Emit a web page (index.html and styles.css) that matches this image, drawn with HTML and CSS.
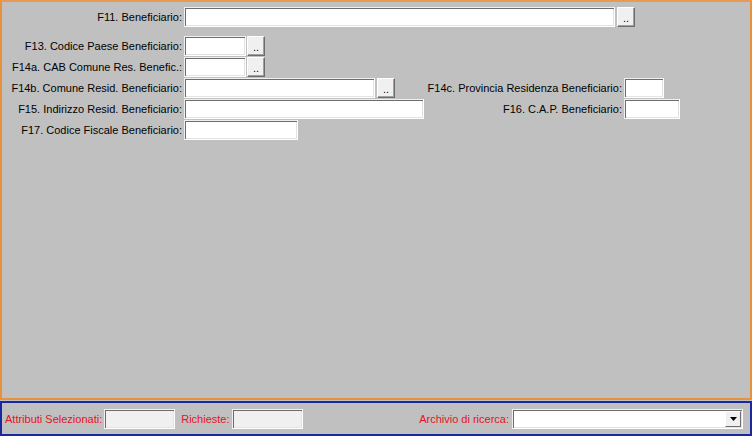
FILE: index.html
```html
<!DOCTYPE html>
<html>
<head>
<meta charset="utf-8">
<link rel="stylesheet" href="styles.css">
</head>
<body>
<div class="main">
  <div class="row row-first">
    <span class="lbl">F11. Beneficiario:</span>
    <span class="field w-431"></span>
    <span class="btn">..</span>
  </div>
  <div class="row row-gap">
    <span class="lbl">F13. Codice Paese Beneficiario:</span>
    <span class="field w-62"></span>
    <span class="btn btn-tight">..</span>
  </div>
  <div class="row">
    <span class="lbl">F14a. CAB Comune Res. Benefic.:</span>
    <span class="field w-62"></span>
    <span class="btn btn-tight">..</span>
  </div>
  <div class="row">
    <div class="left">
      <span class="lbl">F14b. Comune Resid. Beneficiario:</span>
      <span class="field w-191"></span>
      <span class="btn">..</span>
    </div>
    <span class="lbl2">F14c. Provincia Residenza Beneficiario:</span>
    <div class="slot"><span class="field w-40"></span></div>
  </div>
  <div class="row">
    <div class="left">
      <span class="lbl">F15. Indirizzo Resid. Beneficiario:</span>
      <span class="field w-240"></span>
    </div>
    <span class="lbl2">F16. C.A.P. Beneficiario:</span>
    <div class="slot"><span class="field w-56"></span></div>
  </div>
  <div class="row">
    <span class="lbl">F17. Codice Fiscale Beneficiario:</span>
    <span class="field w-114"></span>
  </div>
</div>
<div class="footer">
  <span class="red">Attributi Selezionati:</span>
  <span class="field disabled w-71"></span>
  <span class="red red-sp">Richieste:</span>
  <span class="field disabled w-71"></span>
  <span class="red red-right">Archivio di ricerca:</span>
  <span class="field select">
    <span class="arrow"><svg width="7" height="4" viewBox="0 0 7 4"><polygon points="0,0 7,0 3.5,4" fill="#000"/></svg></span>
  </span>
</div>
</body>
</html>
```
FILE: styles.css
```css
html, body {
  margin: 0;
  padding: 0;
  background: #c0c0c0;
  width: 752px;
  height: 436px;
  overflow: hidden;
  font-family: "Liberation Sans", Arial, sans-serif;
  font-size: 11px;
  color: #000;
}

.main {
  box-sizing: border-box;
  height: 400px;
  border: 2px solid #e8913c;
  border-top-color: #e99a52;
  padding: 5px 0 0 0;
  display: flex;
  flex-direction: column;
  gap: 1px;
}

.row {
  display: flex;
  align-items: center;
  height: 20px;
}

.row-gap {
  margin-top: 8px;
}

.left {
  display: flex;
  align-items: center;
  flex: none;
}

.lbl {
  flex: none;
  width: 180px;
  text-align: right;
  white-space: nowrap;
  margin-right: 2px;
}

.lbl2 {
  flex: 1;
  text-align: right;
  white-space: nowrap;
  margin-right: 2px;
}

.slot {
  flex: none;
  width: 126px;
  display: flex;
  align-items: center;
}

.field {
  box-sizing: border-box;
  flex: none;
  display: inline-block;
  height: 20px;
  background: #fff;
  border: 1px solid;
  border-color: #f0f0f0 #ffffff #ffffff #f0f0f0;
  box-shadow: inset 1px 1px 0 #6d6d6d, inset -1px -1px 0 #e3e3e3;
}

.w-431 { width: 431px; }
.w-62 { width: 62px; }
.w-191 { width: 191px; }
.w-240 { width: 240px; }
.w-114 { width: 114px; }
.w-40 { width: 40px; }
.w-56 { width: 56px; }
.w-71 { width: 71px; }

.btn {
  box-sizing: border-box;
  flex: none;
  width: 18px;
  height: 20px;
  margin-left: 2px;
  background: #f0f0f0;
  border: 1px solid;
  border-color: #ffffff #6d6d6d #6d6d6d #ffffff;
  box-shadow: inset -1px -1px 0 #a0a0a0;
  font-size: 11px;
  line-height: 11px;
  text-align: center;
  padding-top: 5px;
  color: #000;
}

.btn-tight {
  margin-left: 1px;
}

.footer {
  box-sizing: border-box;
  height: 35px;
  margin-top: 1px;
  border: 2px solid #1a28a0;
  display: flex;
  align-items: center;
  padding: 0 0 0 3px;
}

.red {
  color: #e8121e;
  white-space: nowrap;
  margin-right: 2px;
}

.red-sp {
  margin-left: 6px;
}

.red-right {
  margin-left: auto;
  margin-right: 3px;
}

.disabled {
  background: #f0f0f0;
}

.select {
  width: 231px;
  margin-right: 7px;
  display: flex;
  justify-content: flex-end;
  align-items: center;
  padding-right: 1px;
}

.arrow {
  box-sizing: border-box;
  width: 16px;
  height: 16px;
  background: #f0f0f0;
  border: 1px solid;
  border-color: #ffffff #6d6d6d #6d6d6d #ffffff;
  display: flex;
  align-items: center;
  justify-content: center;
}
```
